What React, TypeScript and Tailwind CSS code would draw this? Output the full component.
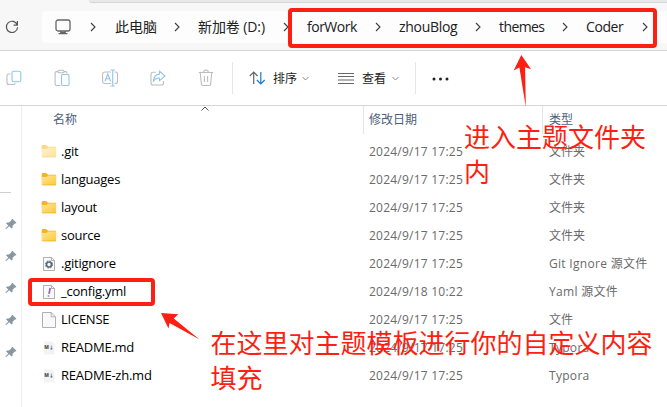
import type { ReactNode } from "react";

const UI = "font-['Open_Sans','Noto_Sans_CJK_SC',sans-serif]";

function Chevron({ className = "" }: { className?: string }) {
  return (
    <svg className={`shrink-0 ${className}`} width="6" height="10" viewBox="0 0 6 10" fill="none" stroke="#3c3c3c" strokeWidth="1.1">
      <path d="M1 1l4 4-4 4" />
    </svg>
  );
}

function Down() {
  return (
    <svg className="shrink-0" width="7" height="5" viewBox="0 0 7 5" fill="none" stroke="#8a8a8a">
      <path d="M.5 1l3 3 3-3" />
    </svg>
  );
}

const crumbs = [
  { label: "此电脑", width: "w-[59px]", text: "text-[14px]" },
  { label: "新加卷 (D:)", width: "w-[85px]", text: "text-[14px] tracking-[-0.1px]" },
  { label: "forWork", width: "w-[68px]", text: "text-[14px] tracking-[-0.5px]" },
  { label: "zhouBlog", width: "w-[76px]", text: "text-[14px] tracking-[-0.3px]" },
  { label: "themes", width: "w-[63px]", text: "text-[14px] tracking-[-0.6px]" },
  { label: "Coder", width: "w-[56px]", text: "text-[14px] tracking-[-0.4px]" },
];

function AddressBar() {
  return (
    <div className="flex h-[48px] shrink-0 items-start border-b border-[#d4d4d4] bg-[#f7f7f7] pt-[8px]">
      <div className="flex h-8 w-[42px] shrink-0 items-center pl-[5px]">
        <svg width="14" height="14" viewBox="0 0 14 14" fill="none" stroke="#555" strokeWidth="1.2">
          <path d="M12.3 5A5.6 5.6 0 1 0 12.6 7.3M12.4 1v4.1H8.6" />
        </svg>
      </div>
      <div className="flex h-8 flex-1 items-center rounded-l-[4px] bg-[#fdfdfd] pl-[13px]">
        <svg className="shrink-0" width="16" height="16" viewBox="0 0 16 16" fill="none" stroke="#666" strokeWidth="1.3">
          <rect x="1" y="1" width="14" height="11" rx="2" />
          <path d="M5.8 12v2.5M10.2 12v2.5M3.5 14.7h9M6 13.3h4" />
        </svg>
        <Chevron className="ml-[19px] mr-[19px]" />
        {crumbs.map((c) => (
          <div key={c.label} className="flex shrink-0 items-center pr-[18px]">
            <span className={`${c.width} ${c.text} whitespace-nowrap leading-5 text-[#202020]`}>{c.label}</span>
            <Chevron />
          </div>
        ))}
      </div>
    </div>
  );
}

function Tool({ children }: { children: ReactNode }) {
  return (
    <svg className="mr-8 shrink-0" width="16" height="18" viewBox="0 0 16 18" fill="none" stroke="#bdbdbd" strokeWidth="1.1">
      {children}
    </svg>
  );
}

function Toolbar() {
  return (
    <div className="flex h-[55px] shrink-0 items-center border-b border-[#d5d5d5] bg-white pl-[6px] text-[12px] text-[#222]">
      <Tool>
        <path d="M4.5 5H3A1.7 1.7 0 0 0 1 7v6.5A2 2 0 0 0 3 15.5h4.5a2 2 0 0 0 1.8-1.3" />
        <rect x="6" y="2.2" width="8.8" height="10.5" rx="1.8" stroke="#91c5ed" />
      </Tool>
      <Tool>
        <path d="M6.5 16.5h-4a1.4 1.4 0 0 1-1.4-1.4V4a1.4 1.4 0 0 1 1.4-1.4H4M10 2.6h1.6A1.4 1.4 0 0 1 13 4v.5" />
        <rect x="4" y="1.2" width="6" height="2.6" rx="1" />
        <rect x="7.5" y="5.5" width="7.5" height="11" rx="1.2" stroke="#91c5ed" />
      </Tool>
      <Tool>
        <path d="M9 3H2.5A2 2 0 0 0 .6 5v7.5a2 2 0 0 0 1.9 2H9M12.5 3h1a2 2 0 0 1 2 2v7.5a2 2 0 0 1-2 2h-1" />
        <path d="M3 12.2L5.8 5l2.8 7.2M4 9.8h3.6M10.7 1.2v15.6M8.4 1h4.5M8.4 17h4.5" stroke="#91c5ed" />
      </Tool>
      <Tool>
        <path d="M6 3.2H3A2 2 0 0 0 1 5v9a2 2 0 0 0 2 2h8.5a2 2 0 0 0 2-2v-2" />
        <path d="M9.5 2.2L15 7l-5.5 4.6V9C7 8.8 5 9.8 3.5 11.8c.3-4 2.5-6.4 6-6.7z" stroke="#91c5ed" />
      </Tool>
      <Tool>
        <path d="M.8 3.5h14.4M5.7 3.3a2.3 2.3 0 0 1 4.6 0M2.2 3.5l1.2 11.6c.1.8.6 1.4 1.4 1.4h6.4c.8 0 1.3-.6 1.4-1.4l1.2-11.6M6.4 7v6M9.6 7v6" />
      </Tool>
      <div className="-ml-[14px] h-8 w-px shrink-0 bg-[#e6e6e6]" />
      <div className="ml-4 flex w-[89px] shrink-0 items-center">
        <svg className="shrink-0" width="17" height="14" viewBox="0 0 17 14" fill="none" strokeWidth="1.2">
          <path d="M4.7 13V1.2M.8 5l3.9-4 3.9 4" stroke="#666" />
          <path d="M11.8 1v11.8M7.9 9l3.9 4 3.9-4" stroke="#1879cf" />
        </svg>
        <span className="ml-[7px] w-[29px] shrink-0 pt-[2px]">排序</span>
        <Down />
      </div>
      <div className="flex w-[77px] shrink-0 items-center">
        <svg className="shrink-0" width="16" height="11" viewBox="0 0 16 11" stroke="#666">
          <path d="M0 .5h16M0 3.5h16M0 7h16M0 10.5h16" />
        </svg>
        <span className="ml-2 w-[30px] shrink-0 pt-[2px]">查看</span>
        <Down />
      </div>
      <div className="h-8 w-px shrink-0 bg-[#e6e6e6]" />
      <svg className="ml-4 mt-px shrink-0" width="17" height="4" viewBox="0 0 17 4" fill="#222">
        <circle cx="2" cy="2" r="1.5" />
        <circle cx="8.5" cy="2" r="1.5" />
        <circle cx="15" cy="2" r="1.5" />
      </svg>
    </div>
  );
}

type Kind = "hidden" | "folder" | "gear" | "yml" | "file" | "md";

function FileIcon({ kind }: { kind: Kind }) {
  if (kind === "folder" || kind === "hidden")
    return (
      <svg className={kind === "hidden" ? "opacity-50" : ""} width="16" height="16" viewBox="0 0 16 16">
        <defs>
          <linearGradient id="folder" x2="1" y2="1">
            <stop stopColor="#ffe598" />
            <stop offset="1" stopColor="#ffc839" />
          </linearGradient>
        </defs>
        <path d="M.7 2a.9.9 0 0 1 .9-.9h3.6L7 2.7h7.2a.9.9 0 0 1 .9.9V8H.7z" fill="#f6b51e" />
        <path d="M.7 5h4.8L7 3.6h8.1v9a.6.6 0 0 1-.6.6H1.3a.6.6 0 0 1-.6-.6z" fill="url(#folder)" />
        <path d="M1 12.9h14" stroke="#e9ad2a" strokeWidth=".6" />
      </svg>
    );
  if (kind === "md")
    return (
      <svg width="16" height="16" viewBox="0 0 16 16">
        <path d="M3 1.5h8L13.5 4v10.5H3z" fill="#f3f3f3" />
        <text x="8" y="9.2" textAnchor="middle" fontSize="4.8" fontWeight="800" fill="#555">M↓</text>
      </svg>
    );
  return (
    <svg width="16" height="16" viewBox="0 0 16 16">
      <path
        d={kind === "file" ? "M1.5.5h8.7l4.3 4.3v10.7h-13z" : "M2.5 1.5h8l3 3v10h-11z"}
        fill="#f9f9f9"
        stroke="#a8a8a8"
        strokeWidth=".9"
      />
      <path d={kind === "file" ? "M10.2.5v4.3h4.3" : "M10.5 1.5v3h3"} fill="none" stroke="#a8a8a8" strokeWidth=".9" />
      {kind === "gear" && (
        <g fill="none" stroke="#566a76">
          <circle cx="8" cy="8.5" r="2.5" strokeWidth="1.6" />
          <circle cx="8" cy="8.5" r="3.6" strokeDasharray="1.5 1.33" strokeWidth="1" />
        </g>
      )}
      {kind === "yml" && <path d="M9.2 4L8 9.8M7.6 11.3l-.2 1.4" stroke="#9468b8" strokeWidth="1.7" />}
    </svg>
  );
}

const files: { name: string; kind: Kind; date: string; type: string }[] = [
  { name: ".git", kind: "hidden", date: "2024/9/17 17:25", type: "文件夹" },
  { name: "languages", kind: "folder", date: "2024/9/17 17:25", type: "文件夹" },
  { name: "layout", kind: "folder", date: "2024/9/17 17:25", type: "文件夹" },
  { name: "source", kind: "folder", date: "2024/9/17 17:25", type: "文件夹" },
  { name: ".gitignore", kind: "gear", date: "2024/9/17 17:25", type: "Git Ignore 源文件" },
  { name: "_config.yml", kind: "yml", date: "2024/9/18 10:22", type: "Yaml 源文件" },
  { name: "LICENSE", kind: "file", date: "2024/9/17 17:25", type: "文件" },
  { name: "README.md", kind: "md", date: "2024/9/17 17:25", type: "Typora" },
  { name: "README-zh.md", kind: "md", date: "2024/9/17 17:25", type: "Typora" },
];

function Sidebar() {
  return (
    <div className="flex w-[22px] shrink-0 flex-col border-r border-[#eeeeee] pt-[86px]">
      <div className="h-px w-[11px] bg-[#d0d0d0]" />
      <div className="flex flex-col pt-[15px]">
        {[0, 1, 2, 3, 4].map((i) => (
          <div key={i} className="flex h-8 items-center pl-[5px]">
            <svg width="12" height="12" viewBox="0 0 12 12" fill="#8b979f">
              <path d="M7 .5l4.5 4.3-1 .8-1 .1-2 2.2.1 1.8-1 .9-2.4-2.4L1 11.3l-.7-.5 3-3.2L1 5.3l1-.9 2 .1 2.2-2.1z" />
            </svg>
          </div>
        ))}
      </div>
    </div>
  );
}

function FileList() {
  return (
    <div className="flex-1">
      <div className="flex h-[28px] text-[12px] leading-[28px] text-[#4c607a]">
        <div className="w-[341px] shrink-0 pl-[31px]">名称</div>
        <div className="w-[179px] shrink-0 border-l border-[#e5e5e5] pl-[5px]">修改日期</div>
        <div className="flex-1 border-l border-[#e5e5e5] pl-[6px]">类型</div>
      </div>
      <div className="pt-[4px]">
        {files.map((f) => (
          <div key={f.name} className="flex h-7 items-center text-[12px] text-[#6a6a6a]">
            <div className="flex w-[347px] shrink-0 items-center pl-[19px] text-black">
              <FileIcon kind={f.kind} />
              <span className="ml-1 text-[13px] tracking-[-0.24px]">{f.name}</span>
            </div>
            <span className="w-[180px] shrink-0 tracking-[0.23px]">{f.date}</span>
            <span className={`whitespace-nowrap ${/[A-Z]/.test(f.type) ? "tracking-[0.3px]" : ""}`}>{f.type}</span>
          </div>
        ))}
      </div>
    </div>
  );
}

function Annotations() {
  const note = "absolute text-[26px] leading-[35px] text-[#fd1f12] whitespace-nowrap";
  return (
    <>
      <div className="absolute left-[288px] top-[8px] h-[40px] w-[369px] rounded-[4px] border-4 border-[#fd1f12]" />
      <div className="absolute left-[28px] top-[278px] h-[28px] w-[127px] rounded-[4px] border-4 border-[#fd1f12]" />
      <svg className="absolute left-0 top-0" width="667" height="407" viewBox="0 0 667 407" fill="#fd1f12">
        <path d="M521.3 55l9.8 14.2-6-2L525.8 107 519.4 67.5l-5.7 3z" />
        <path d="M161 313l17.3 1.2-4.5 4.3L199.5 339.5 169.5 323l-1 5.5z" />
      </svg>
      <div className={`${note} left-[464px] top-[120px]`}>进入主题文件夹<br />内</div>
      <div className={`${note} left-[210.5px] top-[326px]`}>在这里对主题模板进行你的自定义内容<br />填充</div>
    </>
  );
}

export default function App() {
  return (
    <div className={`relative flex h-[407px] w-[667px] flex-col overflow-hidden bg-white ${UI}`}>
      <div className="flex h-[3px] shrink-0 bg-[#f7f7f7]">
        <div className="w-[89px]" />
        <div className="flex-1 rounded-bl-[3px] border-b border-[#d5d5d5] bg-[#e8e8e8]" />
      </div>
      <AddressBar />
      <Toolbar />
      <div className="relative flex min-h-0 flex-1">
        <Sidebar />
        <FileList />
        <svg className="absolute left-[201px] top-0" width="8" height="5" viewBox="0 0 8 5" fill="none" stroke="#555">
          <path d="M.5 4.5L4 1l3.5 3.5" />
        </svg>
      </div>
      <Annotations />
    </div>
  );
}
